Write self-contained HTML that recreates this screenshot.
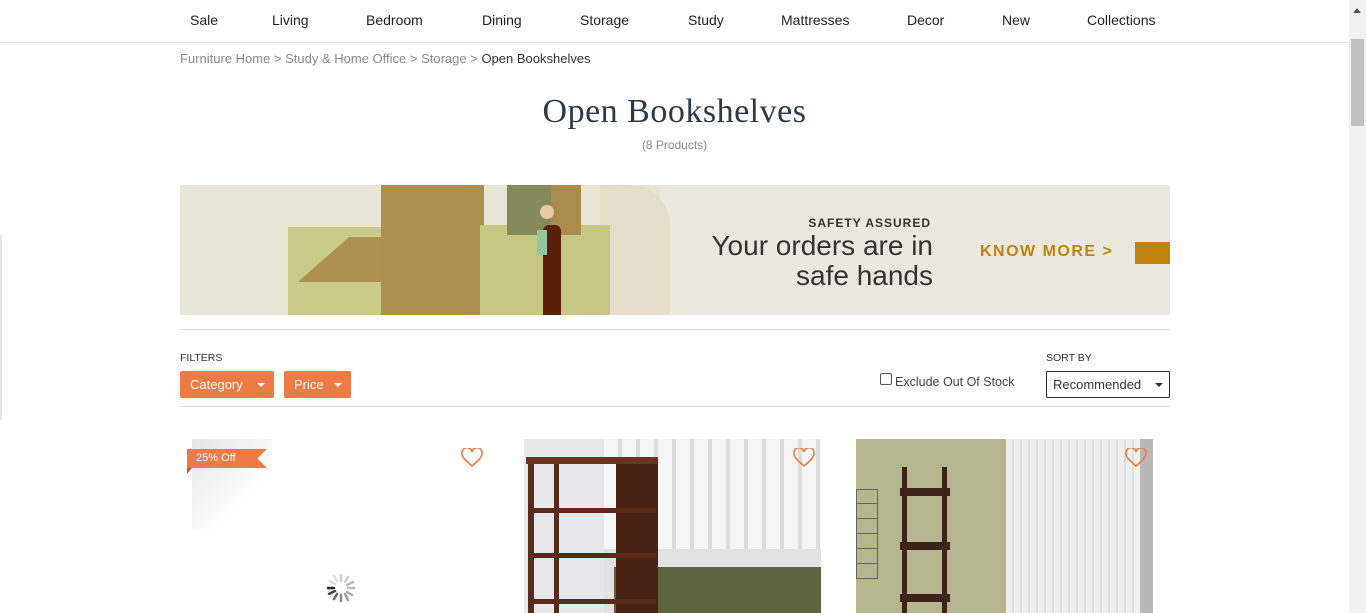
<!DOCTYPE html>
<html><head><meta charset="utf-8">
<style>
*{margin:0;padding:0;box-sizing:border-box}
html,body{width:1366px;height:613px;overflow:hidden;background:#fff;font-family:"Liberation Sans",sans-serif;color:#333}
.nav{position:absolute;left:0;top:0;width:1349px;height:43px;border-bottom:1px solid #e5e5e5}
.nav span{position:absolute;top:12px;font-size:14px;color:#222}
.sb{position:absolute;right:0;top:0;width:17px;height:613px;background:#f1f1f1}
.sb .th{position:absolute;left:2px;top:39px;width:13px;height:87px;background:#c1c1c1}
.sb .ar{position:absolute;left:4px;top:8px;border:4px solid transparent;border-bottom:5px solid #555;border-top:0}
.bc{position:absolute;left:180px;top:51px;font-size:13px;color:#888}
.bc b{font-weight:normal;color:#333}
h1{position:absolute;left:0;width:1349px;top:93px;text-align:center;font-family:"Liberation Serif",serif;font-weight:normal;font-size:34px;color:#2a3a4a;letter-spacing:0.5px}
.cnt{position:absolute;left:0;width:1349px;top:138px;text-align:center;font-size:12px;color:#888}
.ban{position:absolute;left:180px;top:185px;width:990px;height:130px;background:#ebe9df;overflow:hidden}
.hr{position:absolute;left:180px;width:990px;height:1px;background:#ddd}
.btn{position:absolute;top:371px;height:27px;background:#ee7a45;color:#fff;font-size:13px;line-height:27px;padding-left:10px;border-radius:2px}
.btn:after{content:"";position:absolute;right:9px;top:12px;border:4px solid transparent;border-top:4px solid #fff;border-bottom:0}
.lbl{position:absolute;top:352px;font-size:10.5px;color:#333}
.card{position:absolute;top:439px;width:297px;height:174px;overflow:hidden}
.heart{position:absolute;top:448px;width:22px;height:20px}
</style></head><body>
<div class="nav">
<span style="left:190px">Sale</span><span style="left:272px">Living</span><span style="left:366px">Bedroom</span><span style="left:482px">Dining</span><span style="left:580px">Storage</span><span style="left:688px">Study</span><span style="left:781px">Mattresses</span><span style="left:907px">Decor</span><span style="left:1002px">New</span><span style="left:1087px">Collections</span>
</div>
<div class="sb"><div class="ar"></div><div class="th"></div></div>
<div style="position:absolute;left:0;top:235px;width:2px;height:185px;background:#e5e5e5"></div>
<div class="bc">Furniture Home &gt; Study &amp; Home Office &gt; Storage &gt; <b>Open Bookshelves</b></div>
<h1>Open Bookshelves</h1>
<div class="cnt">(8 Products)</div>
<div class="ban">
 <div style="position:absolute;left:0;top:0;width:480px;height:130px;background:#e8e4d6"></div>
 <div style="position:absolute;left:420px;top:0;width:70px;height:130px;background:#e3ddc9;border-radius:0 40px 0 0"></div>
 <div style="position:absolute;left:108px;top:42px;width:95px;height:88px;background:#c9cb89"></div>
 <div style="position:absolute;left:118px;top:52px;width:85px;height:45px;background:#b09050;clip-path:polygon(60% 0,100% 0,100% 100%,0 100%)"></div>
 <div style="position:absolute;left:201px;top:0;width:103px;height:130px;background:#ae8f50"></div>
 <div style="position:absolute;left:300px;top:40px;width:130px;height:90px;background:#c6c782"></div>
 <div style="position:absolute;left:327px;top:0;width:44px;height:50px;background:#858a5a"></div>
 <div style="position:absolute;left:371px;top:0;width:30px;height:50px;background:#a98b4e"></div>
 <div style="position:absolute;left:363px;top:40px;width:18px;height:90px;background:#5b1f08;border-radius:6px 6px 0 0"></div>
 <div style="position:absolute;left:357px;top:45px;width:10px;height:25px;background:#8fc6a0"></div>
 <div style="position:absolute;left:360px;top:20px;width:14px;height:14px;background:#e8c8a8;border-radius:50%"></div>
 <div style="position:absolute;left:530px;top:31px;width:221px;text-align:right;font-size:12px;letter-spacing:1px;color:#333;font-weight:bold">SAFETY ASSURED</div>
 <div style="position:absolute;left:470px;top:46px;width:283px;text-align:right;font-size:28px;line-height:30px;color:#333">Your orders are in<br>safe hands</div>
 <div style="position:absolute;left:800px;top:58px;font-size:16px;font-weight:bold;letter-spacing:1.5px;color:#c0820c">KNOW MORE &gt;</div>
 <div style="position:absolute;left:955px;top:57px;width:35px;height:22px;background:#c0820c"></div>
</div>
<div class="hr" style="top:329px"></div>
<div class="lbl" style="left:180px">FILTERS</div>
<div class="lbl" style="left:1046px">SORT BY</div>
<div class="btn" style="left:180px;width:94px">Category</div>
<div class="btn" style="left:284px;width:67px">Price</div>
<div style="position:absolute;left:880px;top:373px;width:12px;height:12px;border:1px solid #555;border-radius:2px"></div>
<div style="position:absolute;left:895px;top:375px;font-size:12.5px;color:#444">Exclude Out Of Stock</div>
<div style="position:absolute;left:1046px;top:371px;width:124px;height:27px;border:1px solid #333;border-radius:2px;font-size:13px;line-height:25px;padding-left:6px;color:#333">Recommended</div>
<div style="position:absolute;left:1155px;top:383px;border:4px solid transparent;border-top:4px solid #333;border-bottom:0"></div>
<div class="hr" style="top:406px"></div>
<!-- card 1 -->
<div class="card" style="left:192px;background:#fff">
 <div style="position:absolute;left:0;top:0;width:80px;height:90px;background:linear-gradient(135deg,#e6e6e6,#fff 70%)"></div>
</div>
<div style="position:absolute;left:187px;top:449px;width:80px;height:19px;background:#ee7a45;color:#fff;font-size:11px;line-height:19px;padding-left:9px;clip-path:polygon(0 0,100% 0,88% 50%,100% 100%,0 100%)">25% Off</div>
<div style="position:absolute;left:187px;top:468px;border-left:5px solid #b85a30;border-bottom:6px solid transparent"></div>
<svg style="position:absolute;left:326px;top:573px" width="30" height="30" viewBox="0 0 30 30">
<g stroke-width="2.5" stroke-linecap="round">
<line x1="15" y1="2" x2="15" y2="8" stroke="#ccc"/><line x1="22" y1="4" x2="19" y2="9" stroke="#ccc"/><line x1="27" y1="9" x2="21" y2="12" stroke="#bbb"/><line x1="28" y1="15" x2="22" y2="15" stroke="#bbb"/><line x1="26" y1="22" x2="21" y2="19" stroke="#aaa"/><line x1="22" y1="27" x2="19" y2="21" stroke="#999"/><line x1="15" y1="28" x2="15" y2="22" stroke="#888"/><line x1="8" y1="26" x2="11" y2="21" stroke="#666"/><line x1="3" y1="21" x2="9" y2="18" stroke="#444"/><line x1="2" y1="15" x2="8" y2="15" stroke="#222"/><line x1="4" y1="8" x2="9" y2="11" stroke="#ddd"/><line x1="8" y1="3" x2="11" y2="8" stroke="#ddd"/></g></svg>
<!-- card 2 -->
<div class="card" style="left:524px;background:#e6e8eb">
 <div style="position:absolute;left:80px;top:0;width:217px;height:120px;background:repeating-linear-gradient(90deg,#f6f6f6 0 14px,#dcdcdc 14px 18px)"></div>
 <div style="position:absolute;left:80px;top:110px;width:217px;height:65px;background:#e2e2e2"></div>
 <div style="position:absolute;left:90px;top:128px;width:207px;height:47px;background:#5e6340"></div>
 <div style="position:absolute;left:4px;top:18px;width:6px;height:156px;background:#5a2a1a"></div>
 <div style="position:absolute;left:30px;top:20px;width:5px;height:154px;background:#5a2a1a"></div>
 <div style="position:absolute;left:92px;top:18px;width:42px;height:156px;background:#4a2214"></div>
 <div style="position:absolute;left:2px;top:18px;width:132px;height:7px;background:#6a3420"></div>
 <div style="position:absolute;left:4px;top:69px;width:128px;height:5px;background:#5a2a1a"></div>
 <div style="position:absolute;left:4px;top:114px;width:128px;height:5px;background:#5a2a1a"></div>
 <div style="position:absolute;left:4px;top:160px;width:128px;height:5px;background:#5a2a1a"></div>
</div>
<!-- card 3 -->
<div class="card" style="left:856px;background:#b5b58f">
 <div style="position:absolute;left:150px;top:0;width:147px;height:174px;background:repeating-linear-gradient(90deg,#f0f0ee 0 6px,#dedede 6px 8px)"></div>
 <div style="position:absolute;left:284px;top:0;width:13px;height:174px;background:#b8b8b8"></div>
 <div style="position:absolute;left:46px;top:28px;width:5px;height:146px;background:#3e2418"></div>
 <div style="position:absolute;left:86px;top:28px;width:5px;height:146px;background:#3e2418"></div>
 <div style="position:absolute;left:44px;top:49px;width:50px;height:8px;background:#3e2418"></div>
 <div style="position:absolute;left:44px;top:103px;width:50px;height:8px;background:#3e2418"></div>
 <div style="position:absolute;left:44px;top:155px;width:50px;height:8px;background:#3e2418"></div>
 <div style="position:absolute;left:0;top:50px;width:22px;height:90px;border:1px solid #666;background:repeating-linear-gradient(0deg,transparent 0 14px,#666 14px 15px)"></div>
</div>
<svg class="heart" style="left:461px" viewBox="0 0 22 20"><path d="M11 18 C4 12 1 9 1 5.5 A4.5 4.5 0 0 1 11 4 A4.5 4.5 0 0 1 21 5.5 C21 9 18 12 11 18Z" fill="none" stroke="#ee7a45" stroke-width="1.6"/></svg>
<svg class="heart" style="left:793px" viewBox="0 0 22 20"><path d="M11 18 C4 12 1 9 1 5.5 A4.5 4.5 0 0 1 11 4 A4.5 4.5 0 0 1 21 5.5 C21 9 18 12 11 18Z" fill="none" stroke="#ee7a45" stroke-width="1.6"/></svg>
<svg class="heart" style="left:1125px" viewBox="0 0 22 20"><path d="M11 18 C4 12 1 9 1 5.5 A4.5 4.5 0 0 1 11 4 A4.5 4.5 0 0 1 21 5.5 C21 9 18 12 11 18Z" fill="none" stroke="#ee7a45" stroke-width="1.6"/></svg>
</body></html>
